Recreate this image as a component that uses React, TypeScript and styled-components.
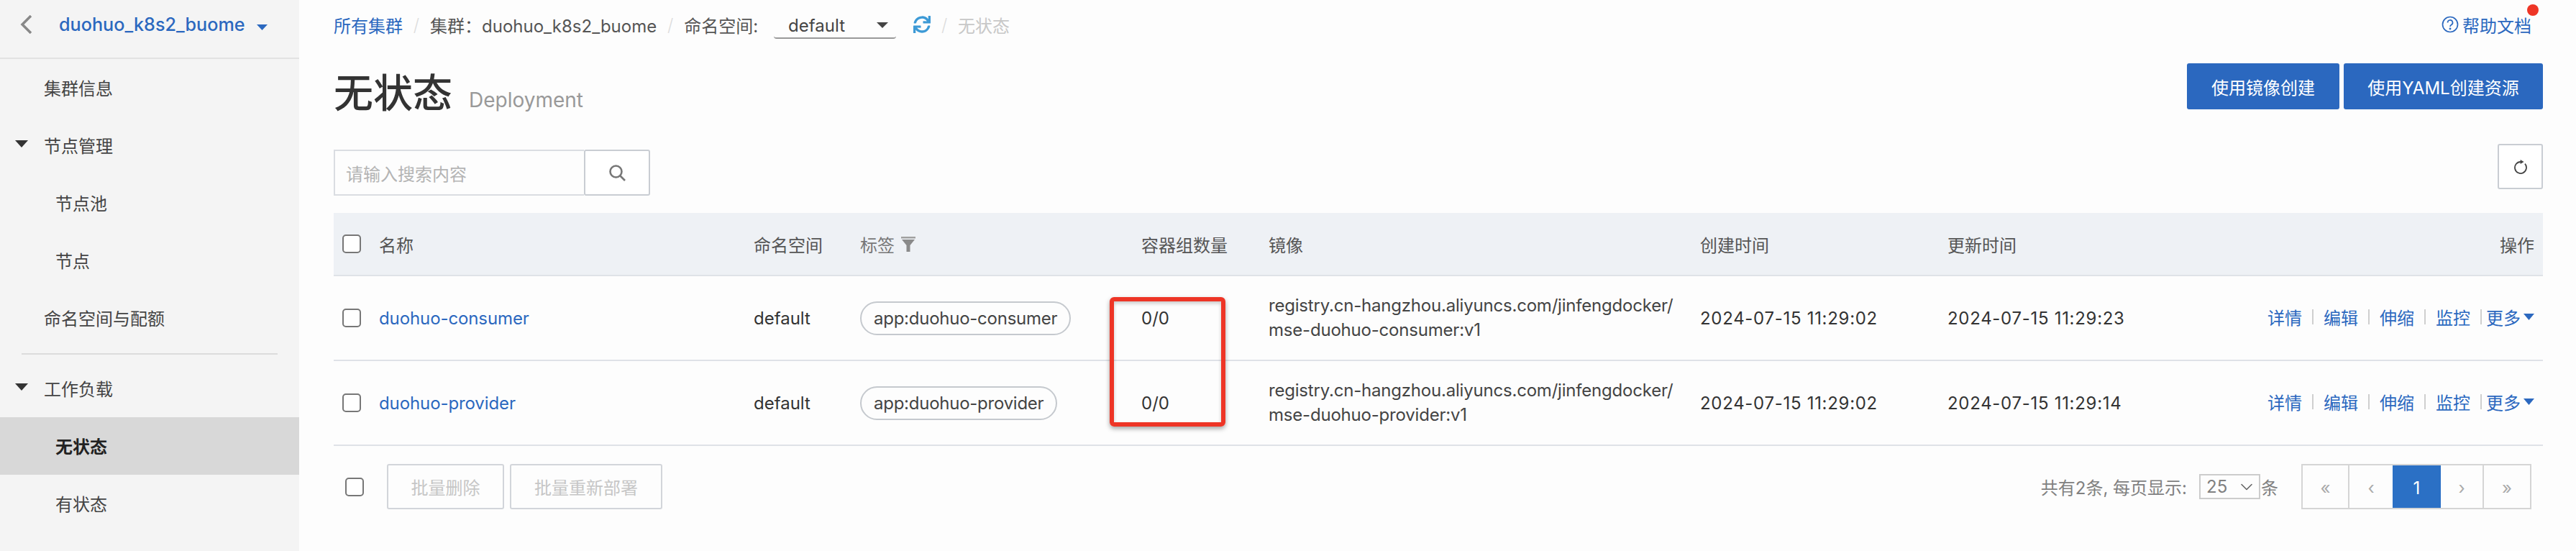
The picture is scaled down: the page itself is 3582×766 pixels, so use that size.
import React from "react";
import styled, { createGlobalStyle } from "styled-components";
import { ChevronDown } from "lucide-react";
import { FaSync } from "react-icons/fa";

const GlobalStyle = createGlobalStyle`
  html, body {
    margin: 0;
    padding: 0;
    background: #fdfdfd;
  }
  body {
    font-family: Inter, "Noto Sans CJK SC", sans-serif;
    font-size: 24px;
    color: #333;
  }
  * {
    box-sizing: border-box;
  }
`;

const Page = styled.div`
  display: flex;
  width: 3582px;
  height: 766px;
  overflow: hidden;
`;

const Sidebar = styled.aside`
  width: 416px;
  flex: none;
  background: #f4f4f4;
`;
const SideHeader = styled.div`
  height: 82px;
  display: flex;
  align-items: center;
  padding: 0 0 12px 28px;
  border-bottom: 2px solid #e2e2e2;
  color: #2b68bf;
  font-weight: 500;
  font-size: 25.2px;
`;
const ClusterName = styled.span`
  margin-left: 37px;
`;
const HeaderCaret = styled.svg`
  margin: 8px 0 0 16px;
`;
const SideItem = styled.div<{ $sub?: boolean; $active?: boolean }>`
  height: 80px;
  display: flex;
  align-items: center;
  position: relative;
  padding: 0 0 2px ${(p) => (p.$sub ? "77px" : "61px")};
  color: ${(p) => (p.$active ? "#222" : "#444")};
  font-weight: ${(p) => (p.$active ? 600 : 400)};
  background: ${(p) => (p.$active ? "#d8d8d8" : "transparent")};
`;
const SideCaret = styled.svg`
  position: absolute;
  left: 21px;
  top: 33px;
`;
const SideDivider = styled.div`
  height: 2px;
  margin: 9px 30px 7px;
  background: #dcdcdc;
`;

const Main = styled.main`
  flex: 1;
  padding: 0 46px 0 48px;
  min-width: 0;
`;
const Crumbs = styled.nav`
  height: 68px;
  display: flex;
  align-items: center;
  position: relative;
`;
const CrumbLink = styled.a`
  color: #2b68bf;
`;
const CrumbText = styled.span<{ $muted?: boolean }>`
  color: ${(p) => (p.$muted ? "#c8c8c8" : "#555")};
`;
const CrumbSep = styled.span`
  width: 38px;
  text-align: center;
  color: #ddd;
  font-weight: 300;
`;
const NamespaceSelect = styled.div`
  width: 170px;
  height: 36px;
  margin: 4px 0 0 22px;
  padding: 0 11px 0 20px;
  display: flex;
  align-items: center;
  justify-content: space-between;
  border-bottom: 2px solid #999;
  border-radius: 0 0 4px 4px;
  color: #444;
`;
const SyncIcon = styled(FaSync)`
  margin-left: 24px;
  color: #3d9ad6;
`;
const HelpLink = styled.a`
  margin-left: auto;
  margin-right: 16px;
  display: flex;
  align-items: center;
  gap: 5px;
  color: #2b68bf;
  position: relative;
`;
const RedDot = styled.span`
  position: absolute;
  top: -11px;
  right: -10px;
  width: 16px;
  height: 16px;
  border-radius: 50%;
  background: #ee3526;
`;
const TitleRow = styled.div`
  display: flex;
  justify-content: space-between;
  margin-top: 20px;
  height: 64px;
`;
const TitleGroup = styled.div`
  display: flex;
  align-items: baseline;
  margin-top: 2px;
`;
const Title = styled.h1`
  margin: 0;
  font-size: 55px;
  font-weight: 500;
  line-height: 78px;
  color: #333;
`;
const Subtitle = styled.span`
  margin-left: 23px;
  font-size: 28px;
  color: #999;
`;
const PrimaryGroup = styled.div`
  display: flex;
  gap: 6px;
`;
const PrimaryButton = styled.button<{ $w: number }>`
  width: ${(p) => p.$w}px;
  height: 64px;
  border: none;
  border-radius: 3px;
  background: #2b68bf;
  color: #fff;
  font: inherit;
`;
const Toolbar = styled.div`
  display: flex;
  justify-content: space-between;
  margin-top: 48px;
  height: 96px;
`;
const SearchGroup = styled.div`
  display: flex;
  margin-top: 8px;
  height: 64px;
`;
const SearchInput = styled.div`
  width: 348px;
  padding-left: 15px;
  display: flex;
  align-items: center;
  border: 2px solid #dadde2;
  border-right: none;
  color: #b4b4b4;
`;
const IconButton = styled.button<{ $w: number }>`
  width: ${(p) => p.$w}px;
  height: ${(p) => (p.$w > 80 ? 64 : 63)}px;
  display: flex;
  align-items: center;
  justify-content: center;
  background: #fff;
  border: 2px solid #c9cdd3;
  border-radius: 3px;
  color: #777;
  padding: 0;
`;

const TABLE_COLUMNS = "63px 521px 148px 391px 177px 600px 344px 1fr";
const HeadRow = styled.div`
  display: grid;
  grid-template-columns: ${TABLE_COLUMNS};
  align-items: center;
  height: 88px;
  background: #eef1f5;
  border-bottom: 2px solid #dfe2e7;
  color: #555;
`;
const BodyRow = styled.div`
  display: grid;
  grid-template-columns: ${TABLE_COLUMNS};
  align-items: center;
  height: 118px;
  border-bottom: 2px solid #dfe2e7;
  color: #333;
`;
const TableBody = styled.div`
  position: relative;
`;
const CheckCell = styled.div`
  padding-left: 12px;
  display: flex;
`;
const Checkbox = styled.span`
  display: block;
  width: 26px;
  height: 26px;
  border: 2px solid #777;
  border-radius: 5px;
  background: #fff;
`;
const NameLink = styled.a`
  color: #2b68bf;
  letter-spacing: -0.1px;
`;
const FilterHead = styled.div`
  display: flex;
  align-items: center;
  gap: 9px;
  color: #777;
`;
const Tag = styled.span`
  display: inline-block;
  height: 47px;
  line-height: 43px;
  padding: 0 17px;
  border: 2px solid #c5c9ce;
  border-radius: 24px;
  color: #444;
  letter-spacing: -0.25px;
`;
const ImageCell = styled.div`
  line-height: 34px;
  color: #444;
  letter-spacing: -0.2px;
`;
const TimeCell = styled.div`
  letter-spacing: 0.7px;
`;
const EndCell = styled.div`
  display: flex;
  justify-content: space-between;
  align-items: center;
  padding-right: 12px;
`;
const Actions = styled.div`
  display: flex;
  align-items: center;
  color: #2b68bf;
  margin-top: -4px;
`;
const ActionSep = styled.span<{ $tight?: boolean }>`
  width: 2px;
  height: 21px;
  margin: 0 ${(p) => (p.$tight ? "6px" : "14px")} 0 14px;
  background: #cfcfcf;
`;
const MoreCaret = styled.svg`
  margin-left: 4px;
`;
const Highlight = styled.div`
  position: absolute;
  left: 1079px;
  top: 29px;
  width: 161px;
  height: 180px;
  border: 6px solid #ee3526;
  border-radius: 6px;
  box-shadow: 0 3px 6px rgba(0, 0, 0, 0.35), inset 0 3px 5px rgba(0, 0, 0, 0.2);
`;

const Footer = styled.div`
  display: flex;
  align-items: center;
  margin-top: 25px;
  height: 63px;
  padding-left: 16px;
`;
const BatchButton = styled.button<{ $w: number }>`
  width: ${(p) => p.$w}px;
  height: 63px;
  margin-right: 8px;
  background: transparent;
  border: 2px solid #d2d5da;
  border-radius: 3px;
  color: #c6c6c6;
  font: inherit;
  padding: 0;
`;
const FooterCheck = styled.div`
  margin-right: 32px;
`;
const PageInfo = styled.div`
  margin-left: auto;
  display: flex;
  align-items: center;
  color: #808080;
`;
const PageSizeSelect = styled.div`
  width: 85px;
  height: 35px;
  margin: 0 1px 0 17px;
  padding: 0 3px 0 8px;
  display: flex;
  align-items: center;
  justify-content: space-between;
  border: 2px solid #ccc;
`;
const Pager = styled.div`
  display: flex;
  height: 63px;
  margin: 0 16px 0 32px;
  border: 2px solid #d5d5d5;
`;
const PagerCell = styled.div<{ $w: number; $active?: boolean; $bar?: boolean }>`
  width: ${(p) => p.$w}px;
  display: flex;
  align-items: center;
  justify-content: center;
  padding-top: 4px;
  color: ${(p) => (p.$active ? "#fff" : "#aaa")};
  background: ${(p) => (p.$active ? "#2b70c5" : "transparent")};
  border-right: ${(p) => (p.$bar ? "2px solid #d5d5d5" : "none")};
`;

const rows = [
  {
    name: "duohuo-consumer",
    tag: "app:duohuo-consumer",
    image: "mse-duohuo-consumer:v1",
    updated: "2024-07-15 11:29:23",
  },
  {
    name: "duohuo-provider",
    tag: "app:duohuo-provider",
    image: "mse-duohuo-provider:v1",
    updated: "2024-07-15 11:29:14",
  },
];

const App: React.FC = () => {
  return (
    <Page>
      <GlobalStyle />
      <Sidebar>
        <SideHeader>
          <svg width="17" height="26" viewBox="0 0 17 26">
            <polyline points="15,1 3,13 15,25" fill="none" stroke="#888" strokeWidth="3.5" />
          </svg>
          <ClusterName>duohuo_k8s2_buome</ClusterName>
          <HeaderCaret width="15" height="8" viewBox="0 0 15 8">
            <polygon points="0,0 15,0 7.5,8" fill="#2b68bf" />
          </HeaderCaret>
        </SideHeader>
        <SideItem>集群信息</SideItem>
        <SideItem>
          <SideCaret width="18" height="10" viewBox="0 0 18 10">
            <polygon points="0,0 18,0 9,10" fill="#333" />
          </SideCaret>
          节点管理
        </SideItem>
        <SideItem $sub>节点池</SideItem>
        <SideItem $sub>节点</SideItem>
        <SideItem>命名空间与配额</SideItem>
        <SideDivider />
        <SideItem>
          <SideCaret width="18" height="10" viewBox="0 0 18 10">
            <polygon points="0,0 18,0 9,10" fill="#333" />
          </SideCaret>
          工作负载
        </SideItem>
        <SideItem $sub $active>
          无状态
        </SideItem>
        <SideItem $sub>有状态</SideItem>
      </Sidebar>
      <Main>
        <Crumbs>
          <CrumbLink>所有集群</CrumbLink>
          <CrumbSep>/</CrumbSep>
          <CrumbText>集群：duohuo_k8s2_buome</CrumbText>
          <CrumbSep>/</CrumbSep>
          <CrumbText>命名空间:</CrumbText>
          <NamespaceSelect>
            default
            <svg width="16" height="8" viewBox="0 0 16 8">
              <polygon points="0,0 16,0 8,8" fill="#444" />
            </svg>
          </NamespaceSelect>
          <SyncIcon size={24} />
          <CrumbSep>/</CrumbSep>
          <CrumbText $muted>无状态</CrumbText>
          <HelpLink>
            <svg width="24" height="24" viewBox="0 0 24 24" fill="none" stroke="#2b68bf" strokeWidth="1.7">
              <circle cx="12" cy="12" r="10.5" />
              <path d="M8.5 9.5a3.5 3.5 0 1 1 5.2 3c-1.1.7-1.7 1.3-1.7 2.5" />
              <circle cx="12" cy="18" r="0.6" />
            </svg>
            帮助文档
            <RedDot />
          </HelpLink>
        </Crumbs>
        <TitleRow>
          <TitleGroup>
            <Title>无状态</Title>
            <Subtitle>Deployment</Subtitle>
          </TitleGroup>
          <PrimaryGroup>
            <PrimaryButton $w={212}>使用镜像创建</PrimaryButton>
            <PrimaryButton $w={277}>使用YAML创建资源</PrimaryButton>
          </PrimaryGroup>
        </TitleRow>
        <Toolbar>
          <SearchGroup>
            <SearchInput>请输入搜索内容</SearchInput>
            <IconButton $w={92}>
              <svg width="24" height="24" viewBox="0 0 24 24" fill="none" stroke="#777" strokeWidth="2.6">
                <circle cx="10.5" cy="10.5" r="8" />
                <line x1="16.5" y1="16.5" x2="23" y2="23" />
              </svg>
            </IconButton>
          </SearchGroup>
          <IconButton $w={63}>
            <svg width="20" height="20" viewBox="0 0 20 20" fill="none" stroke="#444" strokeWidth="1.8">
              <path d="M10 3 A8 8 0 1 0 16 5.7" />
              <polygon points="9.6,0 14.6,3 9.6,6" fill="#444" stroke="none" />
            </svg>
          </IconButton>
        </Toolbar>
        <HeadRow>
          <CheckCell>
            <Checkbox />
          </CheckCell>
          <div>名称</div>
          <div>命名空间</div>
          <FilterHead>
            标签
            <svg width="20" height="21" viewBox="0 0 20 21">
              <rect x="0" y="0" width="20" height="2.5" fill="#a0a0a0" />
              <polygon points="1,4 19,4 12.5,12 12.5,21 7.5,21 7.5,12" fill="#8a8a8a" />
            </svg>
          </FilterHead>
          <div>容器组数量</div>
          <div>镜像</div>
          <div>创建时间</div>
          <EndCell>
            <span>更新时间</span>
            <span>操作</span>
          </EndCell>
        </HeadRow>
        <TableBody>
          {rows.map((row) => (
            <BodyRow key={row.name}>
              <CheckCell>
                <Checkbox />
              </CheckCell>
              <NameLink>{row.name}</NameLink>
              <div>default</div>
              <div>
                <Tag>{row.tag}</Tag>
              </div>
              <div>0/0</div>
              <ImageCell>
                registry.cn-hangzhou.aliyuncs.com/jinfengdocker/
                <br />
                {row.image}
              </ImageCell>
              <TimeCell>2024-07-15 11:29:02</TimeCell>
              <EndCell>
                <TimeCell>{row.updated}</TimeCell>
                <Actions>
                  详情
                  <ActionSep />
                  编辑
                  <ActionSep />
                  伸缩
                  <ActionSep />
                  监控
                  <ActionSep $tight />
                  更多
                  <MoreCaret width="15" height="9" viewBox="0 0 15 9">
                    <polygon points="0,0 15,0 7.5,9" fill="#2b68bf" />
                  </MoreCaret>
                </Actions>
              </EndCell>
            </BodyRow>
          ))}
          <Highlight />
        </TableBody>
        <Footer>
          <FooterCheck>
            <Checkbox />
          </FooterCheck>
          <BatchButton $w={163}>批量删除</BatchButton>
          <BatchButton $w={212}>批量重新部署</BatchButton>
          <PageInfo>
            共有2条, 每页显示:
            <PageSizeSelect>
              25
              <ChevronDown size={28} strokeWidth={1.4} color="#666" />
            </PageSizeSelect>
            条
          </PageInfo>
          <Pager>
            <PagerCell $w={65} $bar>«</PagerCell>
            <PagerCell $w={60}>‹</PagerCell>
            <PagerCell $w={67} $active>1</PagerCell>
            <PagerCell $w={60} $bar>›</PagerCell>
            <PagerCell $w={64}>»</PagerCell>
          </Pager>
        </Footer>
      </Main>
    </Page>
  );
};

export default App;
